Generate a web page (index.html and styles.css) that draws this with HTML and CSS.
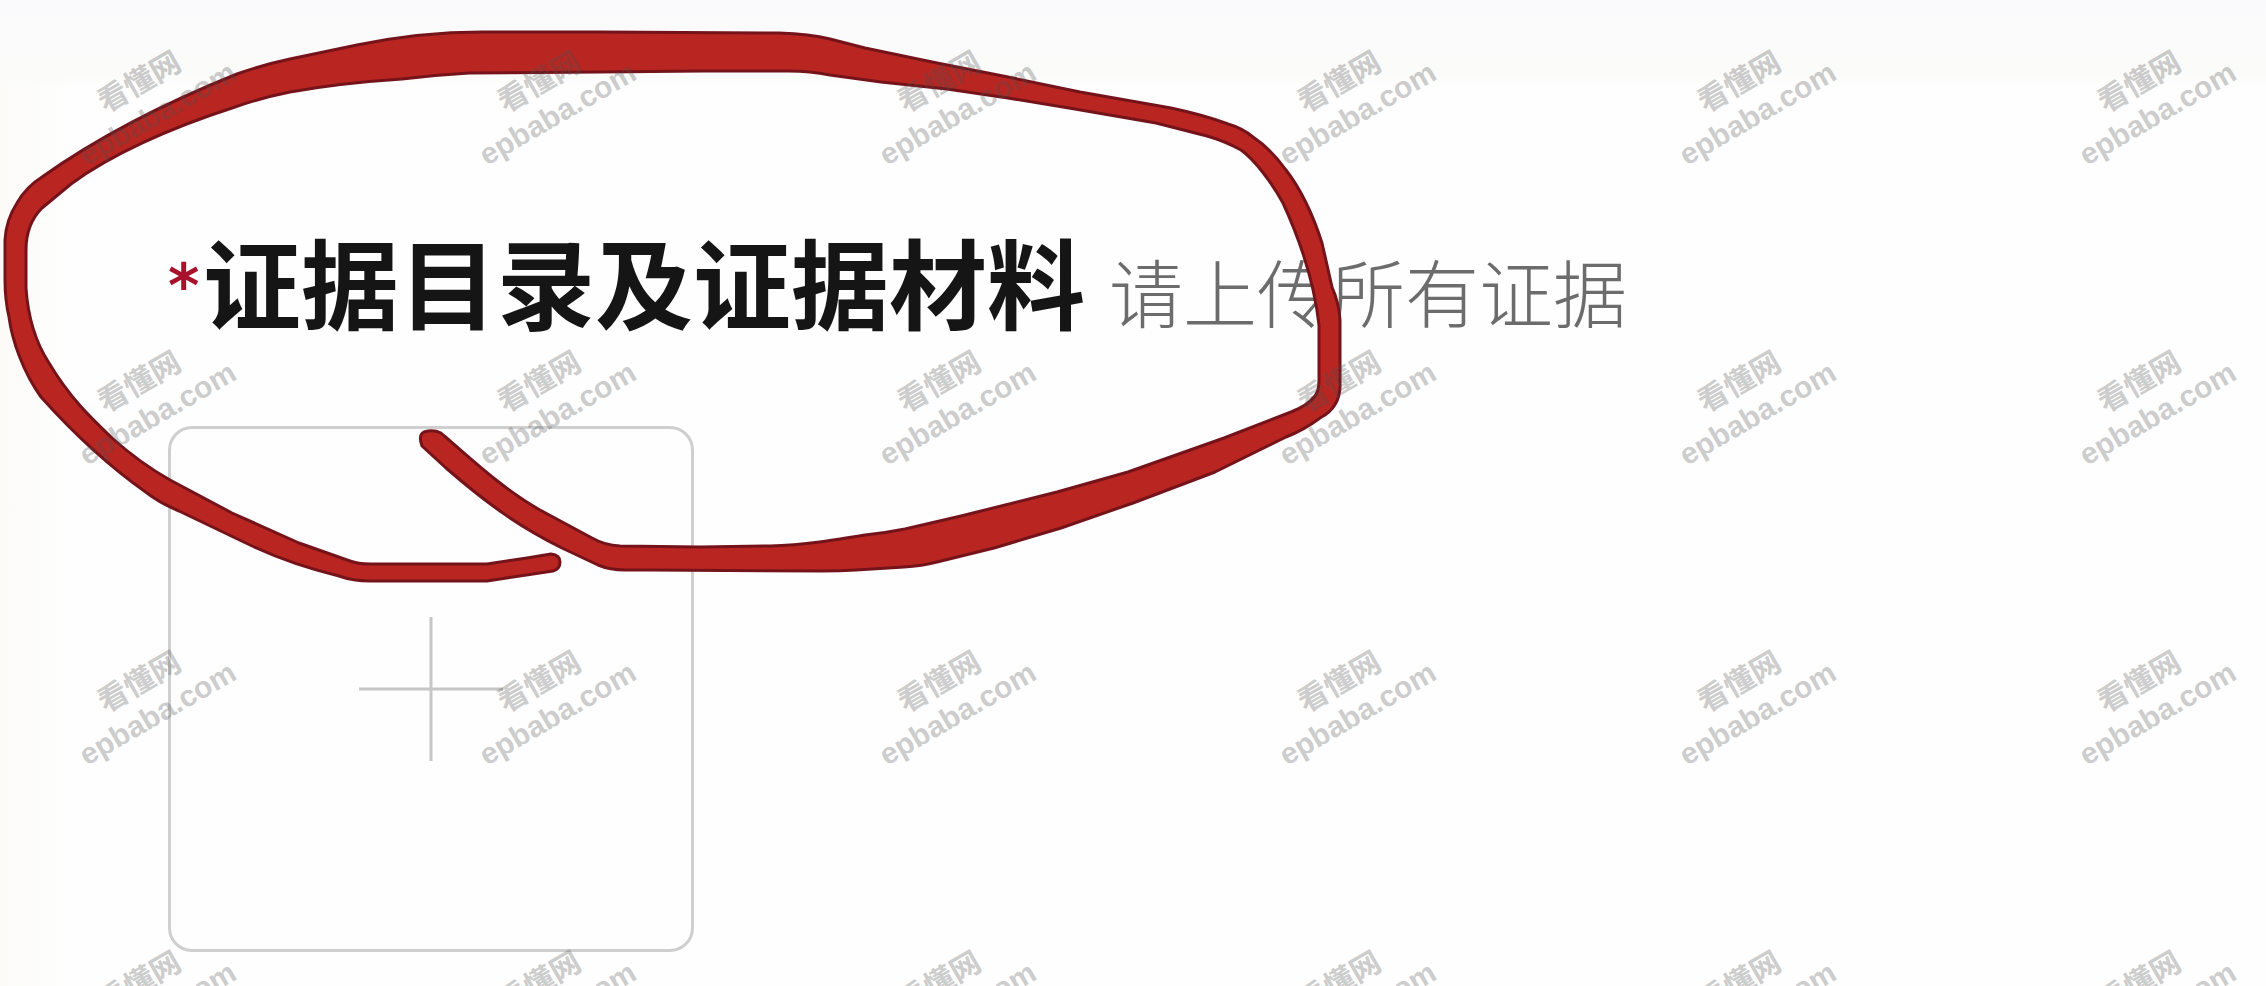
FILE: index.html
```html
<!doctype html>
<html lang="zh-CN">
<head>
<meta charset="utf-8">
<meta name="viewport" content="width=device-width, initial-scale=1">
<title>证据目录及证据材料</title>
<link rel="stylesheet" href="styles.css">
</head>
<body>

<main class="page">

	<header class="field-header">
		<span class="required">*</span>
		<h1 class="field-title">证据目录及证据材料</h1>
		<p class="field-hint">请上传所有证据</p>
	</header>

	<button class="upload" type="button" aria-label="上传证据">
		<svg class="upload-plus" viewBox="0 0 144 144" aria-hidden="true">
			<path d="M0 72H144M72 0V144" />
		</svg>
	</button>

	<!-- red marker loop around the field title -->
	<svg class="marker" viewBox="0 0 1350 590" aria-hidden="true">
		<path d="M5 240 Q6 220 17 203 Q26 187 42 177 C90 143 150 109 237 74
			Q262 65 290 59 L357 45 Q420 32 482 32 L600 32 L779 33 Q810 34 830 39
			L865 48 L937 63 L1008 77 L1080 92 L1171 108 Q1204 115 1228 124
			Q1242 128 1253 137 Q1271 149 1286 170 C1303 192 1313 215 1322 243
			L1332 287 Q1339 303 1340 320 L1340 383 Q1341 407 1320 418 Q1304 430 1286 437
			L1215 472 L1133 503 L1061 528 L994 548 L937 562 Q922 566 904 567 L856 570
			Q840 571 822 571 L650 570 L625 570 Q610 570 598 565 L562 548
			C520 527 490 506 446 468 L422 446 Q418 435 424 432 Q433 429 441 433
			C475 463 505 490 540 510 L592 538 Q604 545 620 546 L700 547
			L770 546 C805 545 835 540 865 535 Q885 533 905 529 L961 516 L1057 492 L1128 472
			L1224 438 L1291 412 Q1307 406 1315 396 Q1319 391 1319 380 L1319 325
			C1314 280 1300 240 1283 203 C1272 183 1255 160 1241 150 Q1225 141 1207 136
			L1156 123 L1069 108 L1008 98 L947 89 L881 82 L830 75 Q810 71 789 71
			L702 71 L600 72 L469 73 Q435 75 402 79 Q340 83 290 92 Q260 98 232 108
			C170 128 110 155 71 184 L42 208 Q26 224 26 250 L26 288
			C28 318 36 343 49 363 C70 398 90 417 112 438 Q140 463 170 480
			L232 513 L299 543 L350 561 Q358 564 370 564 L487 564 L527 558 L551 554
			Q560 555 560 562 Q560 569 553 571 L487 581 L370 581 Q353 581 339 576
			Q290 564 250 545 L179 511 Q160 503 147 493 C110 467 75 435 41 397
			C23 372 12 340 9 317 Q5 300 5 280 Z" />
	</svg>

	<div class="watermarks" aria-hidden="true">
		<span class="mark">看懂网<br>epbaba.com</span>
		<span class="mark">看懂网<br>epbaba.com</span>
		<span class="mark">看懂网<br>epbaba.com</span>
		<span class="mark">看懂网<br>epbaba.com</span>
		<span class="mark">看懂网<br>epbaba.com</span>
		<span class="mark">看懂网<br>epbaba.com</span>

		<span class="mark">看懂网<br>epbaba.com</span>
		<span class="mark">看懂网<br>epbaba.com</span>
		<span class="mark">看懂网<br>epbaba.com</span>
		<span class="mark">看懂网<br>epbaba.com</span>
		<span class="mark">看懂网<br>epbaba.com</span>
		<span class="mark">看懂网<br>epbaba.com</span>

		<span class="mark">看懂网<br>epbaba.com</span>
		<span class="mark">看懂网<br>epbaba.com</span>
		<span class="mark">看懂网<br>epbaba.com</span>
		<span class="mark">看懂网<br>epbaba.com</span>
		<span class="mark">看懂网<br>epbaba.com</span>
		<span class="mark">看懂网<br>epbaba.com</span>

		<span class="mark">看懂网<br>epbaba.com</span>
		<span class="mark">看懂网<br>epbaba.com</span>
		<span class="mark">看懂网<br>epbaba.com</span>
		<span class="mark">看懂网<br>epbaba.com</span>
		<span class="mark">看懂网<br>epbaba.com</span>
		<span class="mark">看懂网<br>epbaba.com</span>
	</div>

</main>

</body>
</html>
```
FILE: styles.css
```css
* { box-sizing: border-box; }

body {
	background: #fefefe;
	font-family: "Liberation Sans", "Noto Sans CJK SC", sans-serif;
	margin: 0;
}

.page {
	background:
		linear-gradient( to bottom, #fafafc 0, #fbfbfa 76px, transparent 88px ),
		linear-gradient( to right, #fcfbf8 0, #fdfdfb 50px, transparent 70px );
	min-height: 100vh;
	overflow: hidden;
	padding: 230px 32px 32px 168px;
	position: relative;
}

.field-header {
	align-items: baseline;
	display: flex;
	font-family: "Noto Sans CJK SC", sans-serif;
	white-space: nowrap;
}

.required {
	align-self: flex-start;
	color: #a8112b;
	font-family: "DejaVu Sans", sans-serif;
	font-size: 60px;
	font-weight: bold;
	line-height: 72px;
	padding-top: 20px;
	width: 35px;
}

.field-title {
	color: #151515;
	font-size: 98px;
	font-weight: bold;
	line-height: 98px;
	margin: 0 24px 0 0;
}

.field-hint {
	color: #6c6c6c;
	font-size: 74px;
	font-weight: 300;
	line-height: 74px;
	margin: 0;
}

.upload {
	align-items: center;
	background: transparent;
	border: 3px solid #cfcfcf;
	border-radius: 24px;
	cursor: pointer;
	display: flex;
	height: 526px;
	justify-content: center;
	margin-top: 98px;
	padding: 0;
	width: 526px;
}

.upload-plus { height: 144px; width: 144px; }
.upload-plus path { fill: none; stroke: #c6c6c6; stroke-width: 3; }

.marker {
	height: 590px;
	left: 0;
	pointer-events: none;
	position: absolute;
	top: 0;
	width: 1350px;
}

.marker path { fill: #b92621; stroke: #74131a; stroke-linejoin: round; stroke-width: 3; }

/* tiled watermark, repeats every 400 x 300 */
.watermarks {
	display: grid;
	gap: 104px 102px;
	grid-auto-rows: 196px;
	grid-template-columns: repeat( 6, 298px );
	inset: 0;
	overflow: hidden;
	place-items: center;
	pointer-events: none;
	position: absolute;
}

.mark {
	color: rgba( 80, 80, 80, 0.3 );
	font-size: 30px;
	font-weight: bold;
	line-height: 36px;
	text-align: center;
	transform: rotate( -30deg );
}
```
